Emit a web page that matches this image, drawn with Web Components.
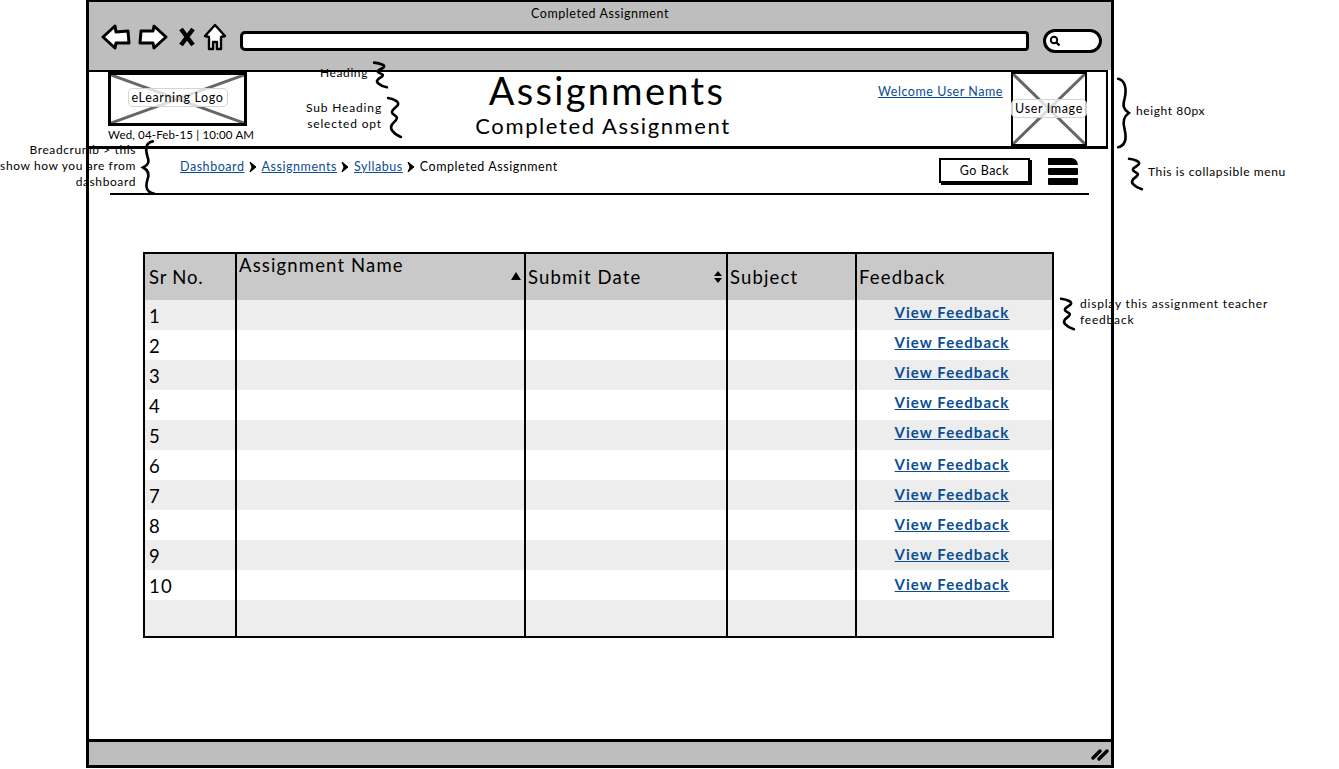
<!DOCTYPE html>
<html>
<head>
<meta charset="utf-8">
<title>Completed Assignment</title>
<style>
  html, body { margin: 0; background: #fff; }
  body { width: 1339px; height: 769px; overflow: hidden; position: relative; font-family: "Lato", "Liberation Sans", sans-serif; color: #000; }
</style>
</head>
<body>
<wire-window>
  <wire-header slot="header"></wire-header>
  <wire-crumbs slot="crumbs"></wire-crumbs>
  <wire-table></wire-table>
</wire-window>

<wire-note style="left:280px;top:62px;width:108px;height:26px" brace="zig">Heading</wire-note>
<wire-note style="left:280px;top:97px;width:122px;height:41px;letter-spacing:.85px" brace="zig">Sub Heading<br>selected opt</wire-note>
<wire-note style="left:0;top:140px;width:156px;height:55px;letter-spacing:.6px" brace="left">Breadcrumb &gt; this<br>show how you are from<br>dashboard</wire-note>
<wire-note style="left:1116px;top:77px;width:100px;height:72px" brace="right" side="left">height 80px</wire-note>
<wire-note style="left:1128px;top:158px;width:170px;height:32px" brace="zig" side="left">This is collapsible menu</wire-note>
<wire-note style="left:1060px;top:298px;width:220px;height:32px;letter-spacing:.8px" brace="zig" side="left">display this assignment teacher<br>feedback</wire-note>

<script>
const windowTemplate = document.createElement("template");
windowTemplate.innerHTML = /*html*/ `
  <style>
    :host {
      display: flex;
      flex-direction: column;
      box-sizing: border-box;
      width: 1028px;
      height: 768px;
      margin-left: 86px;
      border: 3px solid #000;
      border-top-width: 2px;
      background: #fff;
    }
    .chrome { background: #bebebe; height: 68px; flex: none; display: flex; flex-direction: column; }
    .title { text-align: center; font-size: 12.5px; letter-spacing: .55px; line-height: 16px; padding: 4px 0 0 0; }
    .bar { display: flex; align-items: center; padding: 0 10px 0 12px; height: 30px; }
    .icons { display: flex; align-items: center; width: 139px; flex: none; }
    svg { display: block; flex: none; }
    .url { flex: none; box-sizing: border-box; width: 789px; height: 20px; background: #fff; border: 3px solid #000; border-radius: 5px 4px 4px 5px; margin-top: 8px; }
    .search { flex: none; box-sizing: border-box; width: 59px; height: 24px; margin: 7px 0 0 14px; background: #fff; border: 3px solid #000; border-radius: 12px; padding: 3px 0 0 3px; }
    main { flex: 1; min-height: 0; }
    footer { flex: none; height: 26px; box-sizing: border-box; background: #bebebe; border-top: 3px solid #000; display: flex; justify-content: flex-end; align-items: center; padding-right: 2px; }
  </style>
  <div class="chrome">
    <div class="title">Completed Assignment</div>
    <div class="bar">
      <div class="icons">
        <svg width="30" height="26" viewBox="0 0 30 26"><path d="M2 13 L14 2 L15 8 L27 7 L28 19 L15 19 L14 24 Z" fill="#fff" stroke="#000" stroke-width="3" stroke-linejoin="round"/></svg>
        <svg style="margin-left:7px" width="30" height="26" viewBox="0 0 30 26"><path d="M28 13 L16 2 L15 7 L3 7 L2 19 L15 19 L16 24 Z" fill="#fff" stroke="#000" stroke-width="3" stroke-linejoin="round"/></svg>
        <svg style="margin-left:10px" width="18" height="20" viewBox="0 0 18 20"><path d="M3 2 L15 18 M15 2 L3 18" fill="none" stroke="#000" stroke-width="4.5"/></svg>
        <svg style="margin-left:7px" width="24" height="28" viewBox="0 0 24 28"><path d="M12 2 L22 13 L18 14 L18 26 L14 26 L14 19 L10 19 L10 26 L6 26 L6 14 L2 13 Z" fill="#fff" stroke="#000" stroke-width="2.4" stroke-linejoin="round"/></svg>
      </div>
      <div class="url"></div>
      <div class="search"><svg width="12" height="12" viewBox="0 0 12 12"><circle cx="5" cy="5" r="3.2" fill="none" stroke="#000" stroke-width="2"/><path d="M7.5 7.5 L10.5 10.5" stroke="#000" stroke-width="2.4"/></svg></div>
    </div>
  </div>
  <slot name="header"></slot>
  <slot name="crumbs"></slot>
  <main><slot></slot></main>
  <footer>
    <svg width="18" height="14" viewBox="0 0 18 14"><path d="M2 11 L9 4 M8 12 L16 4" fill="none" stroke="#000" stroke-width="3.4" stroke-linecap="round"/></svg>
  </footer>
`;

class WireWindow extends HTMLElement {
  constructor() {
    super();
    this.attachShadow({ mode: "open" });
    this.shadowRoot.append(windowTemplate.content.cloneNode(true));
  }
}

const placeholderTemplate = document.createElement("template");
placeholderTemplate.innerHTML = /*html*/ `
  <style>
    :host { display: flex; position: relative; box-sizing: border-box; border: var(--frame, 3px) solid #000; align-items: center; justify-content: center; background: #fff; }
    svg { position: absolute; inset: 0; width: 100%; height: 100%; }
    span {
      position: relative;
      font-size: 12.5px;
      letter-spacing: .65px;
      line-height: 17px;
      white-space: nowrap;
      padding: 0 3px;
      margin-bottom: var(--lift, 0);
      background: rgba(255,255,255,.78);
      border: 1px solid #d4d4d4;
      border-radius: 5px;
    }
  </style>
  <svg viewBox="0 0 100 100" preserveAspectRatio="none">
    <path d="M0 0 L100 100 M100 0 L0 100" stroke="#666" stroke-width="3" vector-effect="non-scaling-stroke" fill="none"/>
  </svg>
  <span><slot></slot></span>
`;

class WirePlaceholder extends HTMLElement {
  constructor() {
    super();
    this.attachShadow({ mode: "open" });
    this.shadowRoot.append(placeholderTemplate.content.cloneNode(true));
  }
}

const headerTemplate = document.createElement("template");
headerTemplate.innerHTML = /*html*/ `
  <style>
    :host {
      display: grid;
      grid-template-columns: 165px 612px 145px 76px 21px;
      box-sizing: border-box;
      width: 1019px;
      height: 79px;
      border-top: 2px solid #000;
      border-bottom: 3px solid #000;
      border-right: 2px solid #000;
    }
    .brand { padding: 0 0 0 19px; }
    wire-placeholder { width: 139px; height: 54px; --lift: 4px; }
    .date { font-size: 11.5px; letter-spacing: .15px; line-height: 14px; margin-top: 2px; white-space: nowrap; }
    .heading { padding-left: 90px; text-align: center; }
    h1 { margin: -2px 0 0; font-weight: 400; font-size: 38px; line-height: 40px; letter-spacing: 2.3px; padding-left: 4px; }
    h2 { margin: 0; font-weight: 400; font-size: 22px; line-height: 26px; letter-spacing: 1.6px; padding: 3px 4px 0 0; }
    .welcome { text-align: right; padding: 12px 8px 0 0; font-size: 12.5px; line-height: 15px; letter-spacing: .55px; }
    a { color: #0b4d94; text-decoration: underline; }
    wire-placeholder.user { width: 76px; height: 74px; --lift: 2px; --frame: 2px; }
  </style>
  <div class="brand">
    <wire-placeholder>eLearning Logo</wire-placeholder>
    <div class="date">Wed, 04-Feb-15 | 10:00 AM</div>
  </div>
  <div class="heading">
    <h1>Assignments</h1>
    <h2>Completed Assignment</h2>
  </div>
  <div class="welcome"><a href="#">Welcome User Name</a></div>
  <wire-placeholder class="user">User Image</wire-placeholder>
  <div></div>
`;

class WireHeader extends HTMLElement {
  constructor() {
    super();
    this.attachShadow({ mode: "open" });
    this.shadowRoot.append(headerTemplate.content.cloneNode(true));
  }
}

const crumbsTemplate = document.createElement("template");
crumbsTemplate.innerHTML = /*html*/ `
  <style>
    :host {
      display: flex;
      align-items: flex-start;
      box-sizing: border-box;
      width: 979px;
      height: 46px;
      margin-left: 21px;
      border-bottom: 2px solid #000;
      padding: 7px 0 0 70px;
      font-size: 12.5px;
      letter-spacing: .55px;
    }
    nav { display: flex; align-items: center; gap: 4.5px; line-height: 16px; margin-top: 3px; flex: none; width: 759px; white-space: nowrap; }
    a { color: #0b4d94; text-decoration: underline; }
    svg { display: block; }
    button {
      flex: none;
      box-sizing: border-box;
      width: 91px;
      height: 25px;
      margin: 2px 0 0 0;
      padding: 0;
      background: #fff;
      border: 2px solid #000;
      box-shadow: 2px 2px 0 #000;
      font: inherit;
      letter-spacing: .5px;
      color: #000;
    }
    .menu { flex: none; width: 30px; margin: 2px 0 0 18px; display: flex; flex-direction: column; gap: 3px; }
    .menu i { display: block; height: 7px; background: #000; border-radius: 1px; }
    .menu i:first-child { border-radius: 0 7px 0 0; }
  </style>
  <nav>
    <a href="#">Dashboard</a><svg width="8" height="10" viewBox="0 0 8 10"><path d="M1 0 L7 5 L1 10 L3 5 Z" stroke="#000"/></svg>
    <a href="#">Assignments</a><svg width="8" height="10" viewBox="0 0 8 10"><path d="M1 0 L7 5 L1 10 L3 5 Z" stroke="#000"/></svg>
    <a href="#">Syllabus</a><svg width="8" height="10" viewBox="0 0 8 10"><path d="M1 0 L7 5 L1 10 L3 5 Z" stroke="#000"/></svg>
    <span>Completed Assignment</span>
  </nav>
  <button>Go Back</button>
  <div class="menu"><i></i><i></i><i></i></div>
`;

class WireCrumbs extends HTMLElement {
  constructor() {
    super();
    this.attachShadow({ mode: "open" });
    this.shadowRoot.append(crumbsTemplate.content.cloneNode(true));
  }
}

const tableTemplate = document.createElement("template");
tableTemplate.innerHTML = /*html*/ `
  <style>
    :host {
      display: block;
      box-sizing: border-box;
      width: 911px;
      margin: 57px 0 0 54px;
      border: 2px solid #000;
    }
    .grid {
      display: grid;
      grid-template-columns: 90px 289px 202px 129px 197px;
      grid-template-rows: 46px repeat(10, 30px) 36px;
      font-size: 18.5px;
      letter-spacing: 1.15px;
    }
    .cell { border-left: 2px solid #000; box-sizing: border-box; position: relative; white-space: nowrap; }
    .cell:nth-child(5n+1) { border-left: 0; padding-left: 4px; line-height: 32px; }
    .head { background: #c9c9c9; line-height: 46px; padding-left: 2px; }
    .cell.head.first { line-height: 46px; letter-spacing: .8px; }
    .head.up { line-height: 22px; }
    .head svg { position: absolute; top: 18px; right: 3px; }
    .odd { background: #ededed; }
    .link { text-align: center; font-size: 15px; font-weight: 700; letter-spacing: 1.05px; line-height: 24px; padding-right: 5px; }
    .link.low { line-height: 28px; }
    .link a { color: #0b4d94; text-decoration: underline; }
  </style>
  <div class="grid"></div>
`;

class WireTable extends HTMLElement {
  constructor() {
    super();
    this.attachShadow({ mode: "open" });
    this.shadowRoot.append(tableTemplate.content.cloneNode(true));
    const grid = this.shadowRoot.querySelector(".grid");
    let html = `
      <div class="cell head first">Sr No.</div>
      <div class="cell head up">Assignment Name<svg width="10" height="8" viewBox="0 0 10 8"><path d="M0 8 L5 0 L10 8 Z"/></svg></div>
      <div class="cell head">Submit Date<svg style="top:17px;right:4px" width="8" height="12" viewBox="0 0 8 12"><path d="M0 5 L4 0 L8 5 Z M0 7 L4 12 L8 7 Z"/></svg></div>
      <div class="cell head">Subject</div>
      <div class="cell head">Feedback</div>`;
    for (let i = 1; i <= 11; i++) {
      const rowClass = i % 2 ? "odd" : "";
      const label = i <= 10 ? i : "";
      const link = i <= 10 ? '<a href="#">View Feedback</a>' : "";
      const low = i >= 6 ? " low" : "";
      html += `<div class="cell ${rowClass}">${label}</div>
        <div class="cell ${rowClass}"></div><div class="cell ${rowClass}"></div><div class="cell ${rowClass}"></div>
        <div class="cell link${low} ${rowClass}">${link}</div>`;
    }
    grid.innerHTML = html;
  }
}

const braces = {
  right: "M2 1 C9 2 10 7 8 12 C6 16 7 18 12 20 C7 22 6 25 8 29 C10 34 9 38 2 39",
  left: "M11 1 C4 2 4 7 6 12 C8 16 7 18 2 20 C7 22 8 25 6 29 C4 34 5 38 12 39",
  zig: "M1 1 C7 2 12 5 10 8 C8 11 3 13 5 16 C8 19 11 19 8 23 C5 26 2 29 5 33 C7 36 10 38 13 39"
};

const noteTemplate = document.createElement("template");
noteTemplate.innerHTML = /*html*/ `
  <style>
    :host {
      display: flex;
      position: absolute;
      align-items: center;
      justify-content: flex-end;
      gap: 5px;
      font-size: 12px;
      letter-spacing: .6px;
      line-height: 16px;
      white-space: nowrap;
    }
    :host([side="left"]) { flex-direction: row-reverse; }
    :host(:not([side="left"])) .text { text-align: right; }
    .text { margin-bottom: 4px; }
    svg { flex: none; width: 15px; height: 100%; overflow: visible; }
  </style>
  <div class="text"><slot></slot></div>
  <svg viewBox="0 0 14 40" preserveAspectRatio="none"><path fill="none" stroke="#000" stroke-width="2.6" vector-effect="non-scaling-stroke" stroke-linecap="round"/></svg>
`;

class WireNote extends HTMLElement {
  constructor() {
    super();
    this.attachShadow({ mode: "open" });
    this.shadowRoot.append(noteTemplate.content.cloneNode(true));
  }

  connectedCallback() {
    this.shadowRoot.querySelector("path").setAttribute("d", braces[this.getAttribute("brace")] || braces.right);
  }
}

window.customElements.define("wire-window", WireWindow);
window.customElements.define("wire-placeholder", WirePlaceholder);
window.customElements.define("wire-header", WireHeader);
window.customElements.define("wire-crumbs", WireCrumbs);
window.customElements.define("wire-table", WireTable);
window.customElements.define("wire-note", WireNote);
</script>
</body>
</html>
